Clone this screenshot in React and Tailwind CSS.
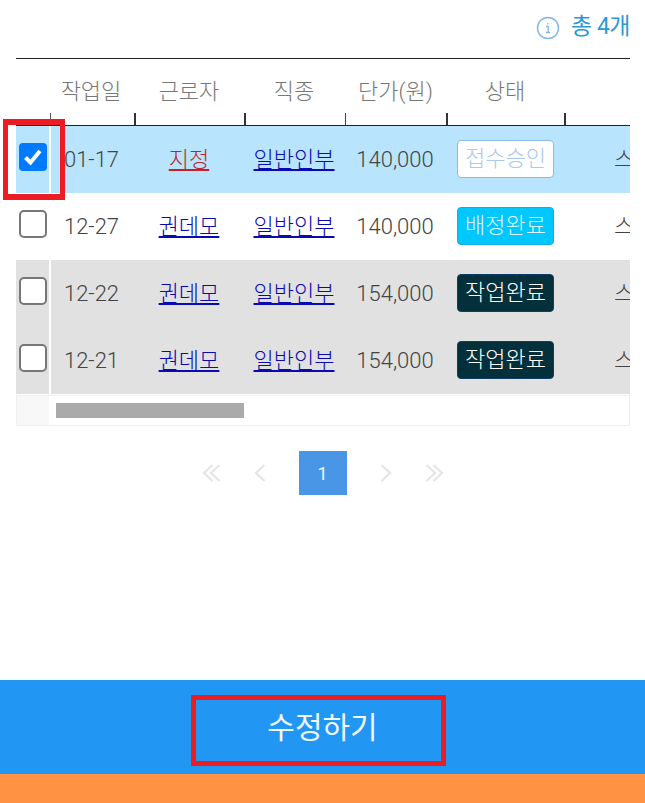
import React from 'react';

const COLS = 'grid grid-cols-[35px_84px_110px_100px_102px_118px_200px] w-[749px]';

const rows = [
    { date: '01-17', worker: '지정', job: '일반인부', price: '140,000', status: '접수승인', checked: true, bg: 'bg-[#b9e4fd]' },
    { date: '12-27', worker: '권데모', job: '일반인부', price: '140,000', status: '배정완료', bg: 'bg-white' },
    { date: '12-22', worker: '권데모', job: '일반인부', price: '154,000', status: '작업완료', bg: 'bg-[#e1e1e1]' },
    { date: '12-21', worker: '권데모', job: '일반인부', price: '154,000', status: '작업완료', bg: 'bg-[#e1e1e1]' },
];

const statusStyle = {
    접수승인: 'bg-white border-[#8db9ea] text-[#a9c9ee]',
    배정완료: 'bg-[#00c8ff] border-[#12ace6] text-[#dff6ff]',
    작업완료: 'bg-[#03303a] border-[#0c3d6b] text-white',
};

const Checkbox = ({ checked }) =>
    checked ? (
        <div className="w-[28px] h-[28px] rounded-[4px] bg-[#007bff] flex items-center justify-center">
            <svg width="20" height="18" viewBox="0 0 20 18" fill="none">
                <path d="M2.5 9.5 L7.5 14.5 L17 3" stroke="white" strokeWidth="4" />
            </svg>
        </div>
    ) : (
        <div className="w-[28px] h-[28px] rounded-[5px] bg-white border-2 border-[#777]" />
    );

// Pager arrows: one or two thin chevrons
const Arrow = ({ dir, double }) => (
    <svg
        width={double ? 19 : 12}
        height="18"
        viewBox={double ? '0 0 19 18' : '0 0 12 18'}
        fill="none"
        stroke="#e6e6e6"
        strokeWidth="2.4"
        className={dir === 'right' ? 'rotate-180' : ''}
    >
        <path d="M10.5 1 L2 9 L10.5 17" />
        {double && <path d="M17.5 1 L9 9 L17.5 17" />}
    </svg>
);

const App = () => {
    return (
        <div className="relative w-[645px] h-[803px] flex flex-col bg-white overflow-hidden font-['Roboto','Noto_Sans_CJK_KR',sans-serif] font-light">
            {/* Total count */}
            <div className="h-[58px] pr-[15px] pb-[3px] flex items-center justify-end gap-[11px]">
                <svg width="24" height="24" viewBox="0 0 24 24" fill="none" stroke="#7fb6e8" className="mt-[1px]">
                    <circle cx="12" cy="12" r="10.5" strokeWidth="1.4" />
                    <path d="M10 10.5 H12.2 V16.5 M10 16.5 H14.2 M11.7 7 V8.4" strokeWidth="1.3" />
                </svg>
                <span className="text-[23px] font-normal tracking-[-0.5px] text-[#2a9ad6]">총 4개</span>
            </div>

            {/* Table */}
            <div className="ml-[16px] mr-[15px] overflow-hidden">
                <div className="border-t border-b border-[#222]">
                    <div className={`${COLS} h-[54px] pt-[10px] items-center text-center text-[22px] text-[#777]`}>
                        <span />
                        <span className="pr-[4px]">작업일</span>
                        <span className="pr-[2px]">근로자</span>
                        <span className="pr-[2px]">직종</span>
                        <span className="pr-[1px]">단가(원)</span>
                        <span className="pr-[2px]">상태</span>
                        <span />
                    </div>
                    <div className="grid grid-cols-[35px_85px_110px_100px_102px_118px] h-[12px]">
                        <span className="border-r border-[#555]" />
                        <span className="border-r-2 border-[#333]" />
                        <span className="border-r-2 border-[#333]" />
                        <span className="border-r border-[#444]" />
                        <span className="border-r-2 border-[#333]" />
                        <span className="border-r-2 border-[#333]" />
                    </div>
                </div>

                {rows.map((row) => (
                    <div key={row.date} className={`${COLS} ${row.bg} h-[67px] items-center text-center text-[22px] text-[#444]`}>
                        <div className="h-full pl-[3px] pb-[5px] flex items-center border-r-2 border-white">
                            <Checkbox checked={row.checked} />
                        </div>
                        <span className="pr-[3px]">{row.date}</span>
                        <span className={`pr-[2px] ${row.checked ? 'text-[#c6202e]' : 'text-[#0a0ab4]'}`}>
                            <span className="underline decoration-2 underline-offset-[2px]">{row.worker}</span>
                        </span>
                        <span className="pr-[2px] text-[#0a0ab4]">
                            <span className="underline decoration-2 underline-offset-[2px]">{row.job}</span>
                        </span>
                        <span className="pr-[2px]">{row.price}</span>
                        <div className="flex justify-start pl-[10px] pb-[2px]">
                            <span className={`w-[97px] h-[38px] rounded-[4px] border flex items-center justify-center ${statusStyle[row.status]}`}>
                                {row.status}
                            </span>
                        </div>
                        <span className="text-left pl-[49px]">스</span>
                    </div>
                ))}

                {/* Scrollbar */}
                <div className="mt-px h-[31px] flex border border-[#eeeeee]">
                    <div className="w-[34px] h-full bg-[#f8f8f8] border-r-2 border-white" />
                    <div className="ml-[5px] mt-[7px] w-[188px] h-[15px] bg-[#aaaaaa]" />
                </div>
            </div>

            {/* Pagination */}
            <div className="mt-[25px] flex items-center justify-center gap-[33px]">
                <Arrow dir="left" double />
                <Arrow dir="left" />
                <div className="w-[48px] h-[44px] bg-[#4a96e6] text-[#e8f6ff] text-[18px] font-normal flex items-center justify-center">1</div>
                <Arrow dir="right" />
                <Arrow dir="right" double />
            </div>

            <div className="flex-1" />

            {/* Bottom action */}
            <div className="relative h-[94px] bg-[#2196f3] flex items-center justify-center text-[30px] font-normal text-[#f0f9ff]">
                수정하기
                <div className="absolute left-[191px] top-[15px] w-[255px] h-[71px] border-[5px] border-[#ed1c24]" />
            </div>
            <div className="h-[29px] bg-[#ff9343]" />

            {/* Highlight on the checkbox */}
            <div className="absolute left-[3px] top-[119px] w-[62px] h-[81px] border-[5px] border-y-[6px] border-[#ed1c24]" />
        </div>
    );
};

export default App;
